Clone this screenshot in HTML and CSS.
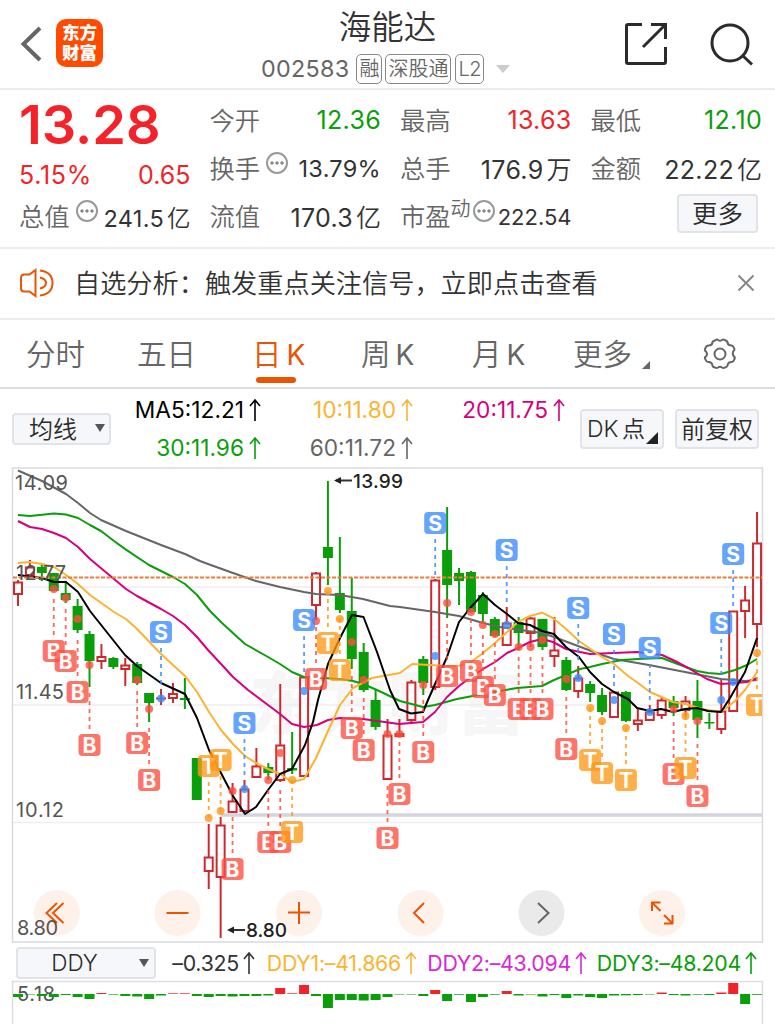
FILE: index.html
```html
<!DOCTYPE html>
<html lang="zh-CN">
  <head>
    <meta charset="utf-8">
    <title>海能达 002583</title>
    <link rel="stylesheet" href="styles.css">
  </head>
  <body>
    <header class="header">
      <div class="header-left">
        <svg class="back" width="22" height="36" viewBox="0 0 22 36"><path d="M20 2L3.500 18L20 34" fill="none" stroke="#666" stroke-width="4"/></svg>
        <div class="logo"><span>东方</span><span>财富</span></div>
      </div>
      <div class="title">
        <h1>海能达</h1>
        <div class="code">
          <span class="num">002583</span>
          <span class="tag">融</span>
          <span class="tag">深股通</span>
          <span class="tag l2">L2</span>
          <i class="caret"></i>
        </div>
      </div>
      <div class="header-right">
        <svg width="44" height="44" viewBox="0 0 44 44" fill="none" stroke="#2b2b2b" stroke-width="3"><path d="M18 2.500H4Q2.500 2.500 2.500 4V40Q2.500 41.500 4 41.500H40Q41.500 41.500 41.500 40V25"/><path d="M27 2.500H41.500V17M41.500 2.500L19 25"/></svg>
        <svg width="44" height="44" viewBox="0 0 44 44" fill="none" stroke="#2b2b2b" stroke-width="3"><circle cx="20" cy="21" r="18"/><path d="M32 33L42 42.500"/></svg>
      </div>
    </header>

    <section class="quote">
      <div class="col">
        <div class="price">13.28</div>
        <div class="row change red"><span>5.15%</span><span>0.65</span></div>
        <div class="row"><label>总值</label><i class="dots"></i><b class="small">241.5<em>亿</em></b></div>
      </div>
      <div class="col">
        <div class="row"><label>今开</label><b class="green">12.36</b></div>
        <div class="row"><label>换手</label><i class="dots"></i><b class="small">13.79%</b></div>
        <div class="row"><label>流值</label><b>170.3<em>亿</em></b></div>
      </div>
      <div class="col">
        <div class="row"><label>最高</label><b class="red">13.63</b></div>
        <div class="row"><label>总手</label><b>176.9<em>万</em></b></div>
        <div class="row"><label>市盈<sup>动</sup></label><i class="dots"></i><b class="small pe">222.54</b></div>
      </div>
      <div class="col">
        <div class="row"><label>最低</label><b class="green">12.10</b></div>
        <div class="row"><label>金额</label><b>22.22<em>亿</em></b></div>
        <div class="row end"><button class="btn more">更多</button></div>
      </div>
    </section>

    <section class="notice">
      <svg width="34" height="30" viewBox="0 0 34 30" fill="none" stroke="#ea5504" stroke-width="2"><path d="M15.500 2V28L9.500 23.500H4Q1 23.500 1 20.500V10Q1 6.500 4 6.500H9.500Z"/><path d="M20 9.500Q26 11 26 15Q26 19 20 20.500M20 2.500Q32.500 4 32.500 15Q32.500 26 20 27.500"/></svg>
      <p>自选分析：触发重点关注信号，立即点击查看</p>
      <svg width="18" height="18" viewBox="0 0 18 18" stroke="#888" stroke-width="2"><path d="M1.500 1.500L16.500 16.500M16.500 1.500L1.500 16.500"/></svg>
    </section>

    <nav class="tabs">
      <a>分时</a>
      <a>五日</a>
      <a class="active">日<span>K</span></a>
      <a>周<span>K</span></a>
      <a>月<span>K</span></a>
      <a class="tab-more">更多<i class="corner"></i></a>
      <svg width="34" height="32" viewBox="0 0 34 32" fill="none" stroke="#666" stroke-width="2"><path d="M12 2.500Q14 1 15 2Q17 3.500 19 2Q20.500 1 22 2.200Q24.500 3 24.500 4.500Q25 7.500 28.500 7.500Q30 7.500 31 10Q32 12 30.500 13Q29 15 30.500 18Q32.500 19 31.500 21Q30.500 24 28.500 24Q25 24 24.500 27.500Q24 29 22 29.500Q20.500 30.500 19 29.500Q17 28 15 29.500Q13.500 30.500 12 29.500Q9.500 29 9.500 27.500Q9 24 5.500 24Q3.500 24 2.500 21.500Q1 19.500 3 18.500Q5 16 3 13.500Q1 12.500 2.500 10Q3.500 7.500 5.500 7.500Q9 7.500 9.500 4.500Q9.500 3 12 2.500Z"/><circle cx="17" cy="16" r="5.500"/></svg>
    </nav>

    <section class="ma-bar">
      <button class="btn select">均线<i class="caret dark"></i></button>
      <div class="ma-list">
        <span class="ma5">MA5:12.21<svg class="up"><use href="#up"/></svg></span>
        <span class="ma10">10:11.80<svg class="up"><use href="#up"/></svg></span>
        <span class="ma20">20:11.75<svg class="up"><use href="#up"/></svg></span>
        <span class="ma30">30:11.96<svg class="up"><use href="#up"/></svg></span>
        <span class="ma60">60:11.72<svg class="up"><use href="#up"/></svg></span>
      </div>
      <button class="btn dk">DK 点<i class="corner dark"></i></button>
      <button class="btn adjust">前复权</button>
    </section>

    <svg id="kline" class="kline" width="775" height="476" viewBox="0 467 775 476"></svg>

    <section class="ddy-bar">
      <button class="btn select-ddy">DDY<i class="caret dark"></i></button>
      <span class="d0">–0.325<svg class="up"><use href="#up"/></svg></span>
      <span class="d1">DDY1:–41.866<svg class="up"><use href="#up"/></svg></span>
      <span class="d2">DDY2:–43.094<svg class="up"><use href="#up"/></svg></span>
      <span class="d3">DDY3:–48.204<svg class="up"><use href="#up"/></svg></span>
    </section>

    <svg id="ddy" class="ddy" width="775" height="44" viewBox="0 980 775 44"></svg>

    <svg class="defs">
      <symbol id="up" viewBox="0 0 12 22"><path d="M6 1V22M1 7L6 1L11 7" fill="none" stroke="currentColor" stroke-width="1.600"/></symbol>
    </svg>
    <script src="chart.js"></script>
  </body>
</html>
```
FILE: styles.css
```css
html, body {
  margin: 0;
  padding: 0;
}
body {
  width: 775px;
  height: 1024px;
  overflow: hidden;
  background: #fff;
  color: #333;
  font-family: Inter, "Noto Sans CJK SC", sans-serif;
  font-weight: 400;
}
* { box-sizing: border-box; }
i, em { font-style: normal; }
svg { display: block; flex: none; }
.defs { width: 0; height: 0; }
.red { color: #f02428; }
.green { color: #0a9f0a; }

/* header */
.header {
  display: grid;
  grid-template-columns: 1fr 260px 1fr;
  height: 90px;
  border-bottom: 2px solid #ececec;
}
.header-left {
  display: flex;
  align-items: center;
  gap: 14px;
  padding-left: 20px;
}
.logo {
  display: flex;
  flex-direction: column;
  align-items: center;
  justify-content: center;
  width: 47px;
  height: 48px;
  margin-top: -2px;
  border-radius: 10px;
  background: #ff4a00;
  color: #fff;
  font-size: 17.500px;
  font-weight: 900;
  line-height: 20px;
}
.title {
  display: flex;
  flex-direction: column;
  align-items: center;
}
.title h1 {
  margin: 7px 0 0;
  font-size: 32.500px;
  font-weight: 350;
  line-height: 42px;
}
.code {
  display: flex;
  align-items: center;
  gap: 3px;
  margin: 5px 4px 0 0;
  color: #666;
  line-height: 30px;
}
.code .num { margin-right: 4px; font-size: 23.300px; letter-spacing: 0.3px; }
.tag {
  height: 30px;
  padding: 0 2px;
  border: 1.500px solid #888;
  border-radius: 5px;
  font-size: 20px;
  font-weight: 350;
  line-height: 28px;
}
.tag.l2 { margin-left: 1px; letter-spacing: -0.5px; }
.caret {
  width: 0;
  height: 0;
  border: 7px solid transparent;
  border-top: 8px solid #ccc;
  border-bottom: 0;
  margin-left: 9px;
}
.header-right {
  display: flex;
  align-items: center;
  justify-content: flex-end;
  gap: 42px;
  padding-right: 21px;
}

/* quote */
.quote {
  display: grid;
  grid-template-columns: repeat(4, 1fr);
  column-gap: 19px;
  height: 159px;
  padding: 5px 13px 0 19px;
  border-bottom: 2px solid #ececec;
}
.row {
  display: flex;
  align-items: center;
  height: 48px;
  white-space: nowrap;
}
.row label {
  color: #666;
  font-size: 25.300px;
  font-weight: 350;
}
.row b {
  margin-left: auto;
  padding-top: 2px;
  font-size: 25px;
  font-weight: 400;
  letter-spacing: 0.3px;
}
.row b em { margin-left: 3px; letter-spacing: 0; font-weight: 350; }
.row .small { font-size: 23.500px; padding-top: 3px; }
.row sup { font-size: 20px; vertical-align: 10px; line-height: 0; }
.dots {
  width: 22px;
  height: 22px;
  margin: -9px 0 0 6px;
  border: 2px solid #999;
  border-radius: 50%;
  background:
    radial-gradient(circle at 4px 9px, #888 1.500px, transparent 1.700px),
    radial-gradient(circle at 9px 9px, #888 1.500px, transparent 1.700px),
    radial-gradient(circle at 14px 9px, #888 1.500px, transparent 1.700px);
}
label:has(sup) + .dots { margin-left: 2px; }
.row .pe { font-size: 22px; letter-spacing: 0; padding-top: 4px; }
.price {
  height: 59px;
  color: #f5222a;
  font-size: 54px;
  font-weight: 600;
  line-height: 60px;
}
.change {
  justify-content: space-between;
  height: 37px;
  padding-top: 5px;
  font-size: 25px;
}
.change span:first-child { letter-spacing: 0.7px; }
.row.end { justify-content: flex-end; }
.btn {
  display: flex;
  align-items: center;
  justify-content: center;
  flex: none;
  padding: 0 0 3px;
  border: 2px solid #e1e3e9;
  border-radius: 4px;
  background: #f6f7fa;
  color: #2b2b2b;
  font: 350 24px Inter, "Noto Sans CJK SC", sans-serif;
}
.more { width: 81px; height: 39px; margin: -4px 4px 0 0; padding-bottom: 3px; font-size: 25.500px; }

/* notice */
.notice {
  display: flex;
  align-items: center;
  height: 71px;
  padding: 0 20px 2px;
  border-bottom: 2px solid #ececec;
}
.notice p {
  flex: 1;
  margin: -2px 0 0 20px;
  font-size: 26.200px;
  font-weight: 350;
}

/* tabs */
.tabs {
  display: flex;
  align-items: center;
  height: 69px;
  padding: 1px 0 0 26px;
  border-bottom: 2px solid #dcdde3;
  color: #666;
  font-size: 29.500px;
  font-weight: 350;
}
.tabs a {
  position: relative;
  display: flex;
  align-items: baseline;
  width: 111px;
  height: 43px;
  line-height: 43px;
}
.tabs a span { margin-left: 5px; font-size: 28px; font-weight: 400; }
.tabs .active { color: #ea5504; margin-left: 4px; width: 109px; }
.active::after {
  content: "";
  position: absolute;
  left: 4px;
  bottom: -7px;
  width: 40px;
  height: 6px;
  border-radius: 3px;
  background: #ea5504;
}
.tabs .tab-more { width: 130px; margin-left: -10px; }
.corner {
  align-self: flex-end;
  width: 0;
  height: 0;
  margin: 0 0 6px 10px;
  border-left: 8px solid transparent;
  border-bottom: 8px solid #666;
}
.tab-more .corner { margin-bottom: 7px; }

/* moving averages */
.ma-bar {
  display: flex;
  align-items: center;
  height: 78px;
  padding: 1px 14px 0 12px;
}
.select { width: 99px; height: 32px; margin-top: 1px; padding-left: 11px; }
.caret.dark {
  margin-left: 18px;
  border-width: 8px 5px 0;
  border-top-color: #555;
}
.ma-list {
  display: grid;
  grid-template-columns: 150px 152px 152px;
  row-gap: 9px;
  margin-right: 15px;
  font-size: 22.700px;
  line-height: 29px;
}
.ma-list span, .ddy-bar span {
  display: flex;
  align-items: center;
  justify-content: flex-end;
  white-space: nowrap;
}
.up { width: 12px; height: 22px; margin-left: 6px; }
.ma-list .up { margin-left: 5px; }
.ma5 { color: #000; }
.ma10, .d1 { color: #fab432; }
.ma20 { color: #d6007f; }
.ma30, .d3 { color: #0a9f0a; }
.ma60 { color: #666; }
.dk { width: 84px; height: 40px; margin-right: 11px; font-size: 23px; word-spacing: -3px; }
.dk .corner { margin: 0 -1px 0 1px; border-left-width: 12px; border-bottom: 12px solid #222; }
.adjust { width: 84px; height: 40px; }

/* DDY */
.ddy-bar {
  display: flex;
  align-items: center;
  height: 37px;
  padding: 2px 18px 0 16px;
  font-size: 21.300px;
  letter-spacing: -0.25px;
}
.select-ddy { width: 140px; height: 32px; padding: 0 0 0 28px; font-size: 22.500px; }
.select-ddy .caret { margin-left: 41px; }
.ddy-bar .up { margin-left: 4px; }
.d0 { width: 99px; }
.ddy-bar .d1 { width: 162px; }
.ddy-bar .d2 { width: 170px; color: #d628d8; }
.ddy-bar .d3 { width: 170px; }

/* chart text */
.axis { fill: #555; font-size: 20px; }
.peak { fill: #222; font-size: 19px; font-weight: 500; }
.badge { fill: #fff; font-size: 21px; font-weight: 700; text-anchor: middle; }
.watermark { fill: #f6f6f6; font-size: 68px; font-weight: 900; }
```
FILE: chart.js
```js
(function(){
  var STEP = 11.92;
  var RED = '#cd2a30', GREEN = '#0a9f0a';

  // r = hollow red, s = solid red, g = green; then high, body top, body bottom, low
  var candles = [
    ['r',580,582,594,606], ['r',560,567,575,577], ['g',564,567,573,581], ['g',573,573,591,591],
    ['g',581,593,600,603], ['g',599,606,630,633], ['g',631,634,661,687], ['r',644,656.5,661,669],
    ['g',657,658,667,669], ['r',658,665,669,686], ['g',662,664,683,685], ['g',693,693,703,722],
    ['s',689,697.5,699.5,705], ['r',683,693.5,698,703], ['g',678,698,700,709], ['g',758,758,800,800],
    ['r',824,857,871,889], ['r',817,825,877,938], ['r',783,801,812,812], ['r',780,789,811,811],
    ['r',748,766,777,777], ['g',763,767,773,780], ['r',684,745,780,782], ['g',732,768,770.5,774],
    ['r',677,677,776,776], ['r',572,573,605,620], ['g',481,547,558,585], ['g',537,593,610,613],
    ['g',578,611,659,669], ['g',643,652,690,692], ['g',690,700,727,730], ['r',719,735,779,780],
    ['s',719,733,737,737], ['r',680,682,720,722], ['g',656,659,683,695], ['r',579,580,687,690],
    ['g',507,550,585,618], ['g',568,573,581,605], ['g',571,572,612,613], ['g',592,595,614,623],
    ['g',617,619,636,637], ['r',607,623,645,645], ['g',617,622,633,650], ['r',617,618,633,647],
    ['g',619,619,647,650], ['r',617,650,656,667], ['g',657,660,690,691], ['r',666,678,691,698],
    ['g',681,684,693,702], ['g',688,695,712,715], ['r',692,692,717,717], ['g',691,692,721,722],
    ['r',709,720,724,731], ['r',705,712,720,720], ['r',697,700,715,719], ['g',696,701,708,716],
    ['r',696,701,710,716], ['g',680,701,720,738], ['g',713,722,723.5,729], ['r',680,711,729,734],
    ['r',611,611,711,711], ['r',586,600,611,638], ['r',512,543,624,647]
  ];

  var lines = [
    ['#666', '18,470.5 42,481 66,494 78,503 90,513 101,520 126,531 161,545 185,554 200,561 208,564 233,573 256,581 280,587 304,592 316,594 340,595 363,599 390,606 400,607 435,612 459,616 483,623 500,627 542,633 554,637 578,646 602,655 614,659 649,665 685,672 721,679 745,681 757,680'],
    [GREEN, '18,515 30,516 54,513.5 66,514.5 78,518 90,525 101,531 114,541 126,549.6 149,565 173,577 185,584 197,595 210,611 222,623 245,644 268,657 280,664 292,672 304,677 323,678 340,679 353,681 363,684 377,690 400,701 423,707 435,705 457,699 483,694 517,688 542,686 554,680 580,669 590,667 602,664 622,660 638,659 662,658 675,663 697,671 708,673 721,674 735,670 747,665 757,659'],
    ['#d6007f', '18,521 30,527 42,529 54,533 66,538 78,547 90,559 126,589 137,596 161,609 173,616 185,625 197,637 208,650 222,665 233,677 248,690 268,705 280,714 292,724 304,727 317,725 328,720 340,718 363,719 399,724 423,722 435,712 447,697 459,686 471,677 483,669 495,662 507,653 518,648 530,642 542,639 553,642 566,649 580,652 590,654 637,652 662,655 675,661 688,668 707,679 721,684 735,683 747,682 757,678'],
    ['#fab432', '18,563 30,562 42,564 54,567 66,575 78,584 90,595 114,612 126,619 137,629 161,654 173,665 185,676 197,692 209,712 221,730 233,744 245,756 256,763 268,769 280,774 292,782 304,779 316,758 328,731 340,705 353,688 372,678 400,673 412,664 447,666 459,665.7 471,662 483,653 495,643 507,632 518,622 530,616 542,612.7 553,618 566,629 579,641 602,657 614,664 628,676 638,683 650,692 673,702 685,704 702,709 721,712 735,701 745,690 757,672'],
    ['#000', '18,575 42,578 54,582 66,582 78,592 90,611 125,655 137,666 161,683 185,694 197,718 209,750 221,773 233,796 245,814 256,807 268,790 280,774 292,769 305,745 313,722 318,700 328,664 340,638 352,615 363.5,617 377,652 390,690 399,709 411,713.5 423,712 428,700 447,657 459,622 471,607 483,594 495,605 507,614 518,623 530,625 542,631 554,634 566,647 579,657 590,672 602,684 614,692 628,699 637,708 650,711 661,709 673,712 685,709 697,708 708,711 721,712 730,698 745,672 757,638']
  ];

  // kind, candle index, dot y, badge centre y
  var marks = [
    ['B',3,589,651], ['B',4,598,661], ['B',5,619,692], ['B',6,665,745], ['B',10,680,743], ['B',11,709,780],
    ['B',18,791,869], ['B',21,780,842], ['B',22,753,842], ['B',25,621,679], ['B',28,642,728], ['B',29,680,750],
    ['B',31,734,838], ['B',32,734,794], ['B',34,685,752], ['B',36,603,676], ['B',38,612,671], ['B',39,625,687],
    ['B',40,634,695], ['B',42,647,709], ['B',43,647,709], ['B',44,640,709], ['B',46,679,749], ['B',55,709,774],
    ['B',57,721,796],
    ['T',16,818,766], ['T',17,811,760], ['T',23,780,832], ['T',26,591,643], ['T',27,619,670], ['T',48,708,760],
    ['T',49,721,773], ['T',51,728,780], ['T',56,716,768], ['T',62,653,705],
    ['S',12,698.5,632], ['S',19,789,723], ['S',24,691,620], ['S',35,656,523], ['S',41,625,550], ['S',47,678,608],
    ['S',50,700,634], ['S',53,712,648], ['S',59,700,623], ['S',60,682,554]
  ];
  var colors = { B: '#ff4d3d', T: '#ff9914', S: '#3b8cff' };

  // + is drawn red above the base line, - green below it
  var ddy = [-3,-0.4,-2,-3,-1,-3,-5,1,-0.6,-2,-2.5,-5,-1.5,0.7,0.7,-2,-3,-2,-2.5,-2,-2,-1.5,6,0.7,9,-2,-14,-6,-6,-6.5,-6,
    -3,-0.4,-0.4,-2,4,-7,-0.7,-8,-3,-0.7,3,-1.5,-0.2,-2.5,-1,-4,-1.5,-3,-4,-1.5,-1.3,-1,-0.2,1.5,-1,-1.5,-0.6,-1,1.5,11,-10,-0.8];

  function x(i){
    return 18 + i * STEP;
  }
  function line(x1, y1, x2, y2, color, width, extra){
    return '<line x1="' + x1 + '" y1="' + y1 + '" x2="' + x2 + '" y2="' + y2 + '" stroke="' + color + '" stroke-width="' + width + '" ' + (extra || '') + '/>';
  }
  function rect(x, y, w, h, attrs){
    return '<rect x="' + x + '" y="' + y + '" width="' + w + '" height="' + h + '" ' + attrs + '/>';
  }
  function text(x, y, cls, str, len){
    return '<text x="' + x + '" y="' + y + '" class="' + cls + '"' + (len ? ' textLength="' + len + '"' : '') + '>' + str + '</text>';
  }

  var out = '<clipPath id="plot"><rect x="12" y="467" width="750" height="476"/></clipPath>';
  out += text(249, 729, 'watermark', '东方财富', 276);
  [587, 705, 822.5].forEach(function(y){
    out += line(13, y, 762, y, '#eeeef3', 1.5);
  });
  out += rect(12.5, 468, 750, 474, 'fill="none" stroke="#d9dae0" stroke-width="1.5"');
  out += line(221, 815, 762, 815, '#d3d4dc', 3.5);

  candles.forEach(function(c, i){
    var cx = x(i), color = c[0] == 'g' ? GREEN : RED;
    if (c[0] == 'r') {
      out += line(cx, c[1], cx, c[2], color, 2) + line(cx, c[3], cx, c[4], color, 2);
      out += rect(cx - 4, c[2] + 0.5, 8, Math.max(c[3] - c[2] - 0.5, 0.5), 'fill="#fff" fill-opacity="0.6" stroke="' + color + '" stroke-width="2"');
    } else {
      out += line(cx, c[1], cx, c[4], color, 2);
      out += rect(cx - 5, c[2], 10, c[3] - c[2], 'fill="' + color + '"');
    }
  });

  lines.forEach(function(l){
    out += '<polyline points="' + l[1] + '" fill="none" stroke="' + l[0] + '" stroke-width="2" stroke-linejoin="round"/>';
  });
  out += line(13, 577.5, 762, 577.5, '#ee7c3c', 2, 'stroke-dasharray="4 1.5"');

  out += '<g clip-path="url(#plot)">';
  marks.forEach(function(m){
    var cx = x(m[1]), color = colors[m[0]], y = m[3];
    var below = m[2] > y;
    var from = below ? y + 16 : y - 52;
    out += line(cx, from, cx, from + 36, color, 1.8, 'stroke-dasharray="4 4" opacity="0.85"');
    out += '<circle cx="' + cx + '" cy="' + m[2] + '" r="4" fill="' + color + '" opacity="0.8"/>';
    out += rect(cx - 11, y - 11, 22, 22, 'rx="4" fill="' + color + '" opacity="0.78"');
    out += text(cx, y + 7.6, 'badge', m[0]);
  });
  out += '</g>';

  out += text(15, 490, 'axis', '14.09', 53) + text(16, 580, 'axis', '12.77', 50) + text(16, 699, 'axis', '11.45', 48);
  out += text(16, 817, 'axis', '10.12', 48);
  out += line(336, 480.5, 352, 480.5, '#333', 2) + '<path d="M334 480.500L341 477V484Z" fill="#222"/>';
  out += text(353, 488, 'peak', '13.99', 50);
  out += line(229, 930, 245, 930, '#333', 2) + '<path d="M227 930L234 926.500V933.500Z" fill="#222"/>';

  // round controls
  [
    [57, 'M57 903L46.500 913L57 923M63.500 903L53 913L63.500 923'],
    [177.5, 'M166.500 913H188.500'],
    [299, 'M288 912.500H310M299 902V924'],
    [420.500, 'M424 903L414 913L424 923'],
    [541.500, 'M538 903L548.500 913L538 923'],
    [662, 'M652 911V902.500H660.500M652 902.500L660.500 911M672.500 915V923.500H664M672.500 923.500L664 915']
  ].forEach(function(b, i){
    var gray = i == 4;
    out += '<circle cx="' + b[0] + '" cy="913" r="23" fill="' + (gray ? '#d8d8d8' : '#fbe5d8') + '" opacity="0.55"/>';
    out += '<path d="' + b[1] + '" fill="none" stroke="' + (gray ? '#666' : '#ea5504') + '" stroke-width="2"/>';
  });
  out += text(17, 935, 'axis', '8.80', 41) + text(246, 937, 'peak', '8.80', 41);
  document.getElementById('kline').innerHTML = out;

  out = '<path d="M12.500 1024V981.500H762.500V1024" fill="none" stroke="#dddee3" stroke-width="1.500"/>';
  out += text(17, 1001, 'axis', '5.18', 38);
  ddy.forEach(function(v, i){
    var h = Math.max(Math.abs(v), 0.5);
    out += rect(x(i) - 5, v > 0 ? 994 - h : 994, 10, h, 'fill="' + (v > 0 ? '#f02428' : GREEN) + '"');
  });
  document.getElementById('ddy').innerHTML = out;
})();
```
